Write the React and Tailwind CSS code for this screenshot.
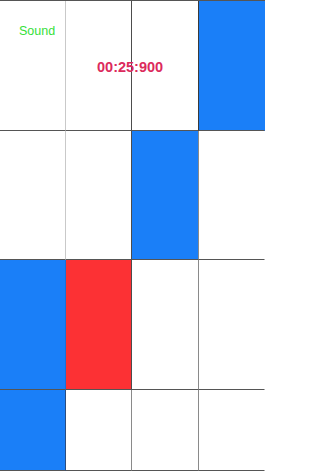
import React from 'react'

const BLUE = 'bg-[#1a7ff8]'
const RED = 'bg-[#fc3134]'
const WHITE = 'bg-white'

// each row: [fill, right border colour] per tile
const rows = [
  { h: 'h-[130px]', tiles: [[WHITE, 'border-r-[#c9c9c9]'], [WHITE, 'border-r-[#4d4d4d]'], [WHITE, 'border-r-[#3a3a3a]'], [BLUE, 'border-r-transparent']] },
  { h: 'h-[129px]', tiles: [[WHITE, 'border-r-[#c9c9c9]'], [WHITE, 'border-r-[#4d4d4d]'], [BLUE, 'border-r-[#8a8a8a]'], [WHITE, 'border-r-transparent']] },
  { h: 'h-[130px]', tiles: [[BLUE, 'border-r-[#1a6fd8]'], [RED, 'border-r-[#4d4d4d]'], [WHITE, 'border-r-[#8a8a8a]'], [WHITE, 'border-r-transparent']] },
  { h: 'h-[81px]', tiles: [[BLUE, 'border-r-[#2a4d80]'], [WHITE, 'border-r-[#8a8a8a]'], [WHITE, 'border-r-[#8a8a8a]'], [WHITE, 'border-r-transparent']] },
]

export default function App() {
  return (
    <div className="relative h-[471px] w-[265px] overflow-hidden border-t border-t-[#555] bg-white font-['Liberation_Sans',Arial,sans-serif]">
      {rows.map((row, i) => (
        <div key={i} className={`grid grid-cols-[66px_66px_67px_1fr] ${row.h}`}>
          {row.tiles.map(([fill, line], j) => (
            <div key={j} className={`${fill} border-r border-b border-b-[#555] ${line}`} />
          ))}
        </div>
      ))}

      <span className="absolute left-[19px] top-[24px] text-[12.5px] leading-none text-[#36e03a]">Sound</span>
      <span className="absolute left-[97px] top-[59px] text-[14.5px] font-bold leading-none text-[#dc2a5c]">00:25:900</span>
    </div>
  )
}
